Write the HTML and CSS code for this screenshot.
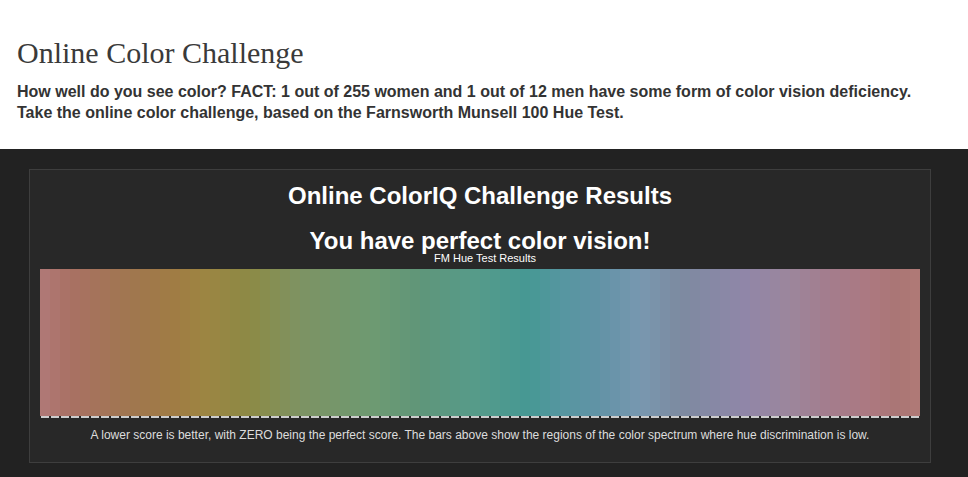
FILE: index.html
```html
<!DOCTYPE html>
<html>

<head>
    <title>Online Color Challenge</title>
    <link rel="stylesheet" href="styles.css">
</head>

<body>
    <div class="intro">
        <h1>Online Color Challenge</h1>
        <p>How well do you see color? FACT: 1 out of 255 women and 1 out of 12 men have some form of color vision deficiency.<br>
            Take the online color challenge, based on the Farnsworth Munsell 100 Hue Test.</p>
    </div>

    <div class="results">
        <div class="panel">
            <h2>Online ColorIQ Challenge Results</h2>
            <h3>You have perfect color vision!</h3>
            <div class="chart-label">FM Hue Test Results</div>
            <div class="chart">
                <div class="bars" id="bars"></div>
                <div class="baseline"></div>
            </div>
            <p class="note">A lower score is better, with ZERO being the perfect score. The bars above show the regions of the color spectrum where hue discrimination is low.</p>
        </div>
    </div>

    <script>
        // colour stops across the spectrum (x offset in px, colour)
        const stops = [
            [0, "#b07a78"], [30, "#a97064"], [90, "#a0764f"], [135, "#a07c44"],
            [160, "#9e8442"], [210, "#8c8a45"], [260, "#7d9363"], [335, "#6d9a72"],
            [380, "#5f9579"], [430, "#579b88"], [490, "#469894"], [520, "#5596a0"],
            [560, "#6292a6"], [600, "#7898b0"], [640, "#7c8aa0"], [680, "#8888a6"],
            [705, "#9086a8"], [750, "#9c869c"], [790, "#a47c8c"], [830, "#ac7880"],
            [860, "#aa7674"], [880, "#b07a76"]
        ];

        function hex(c) {
            return [1, 3, 5].map(i => parseInt(c.substr(i, 2), 16));
        }

        function colourAt(x) {
            for (let i = 0; i < stops.length - 1; i++) {
                const a = stops[i], b = stops[i + 1];
                if (x >= a[0] && x <= b[0]) {
                    const t = (x - a[0]) / (b[0] - a[0]);
                    const ca = hex(a[1]), cb = hex(b[1]);
                    const rgb = ca.map((v, k) => Math.round(v + (cb[k] - v) * t));
                    return `rgb(${rgb.join(",")})`;
                }
            }
            return stops[stops.length - 1][1];
        }

        const bars = document.getElementById("bars");
        for (let i = 0; i < 88; i++) {
            const bar = document.createElement("div");
            bar.className = "bar";
            bar.style.backgroundColor = colourAt(i * 10 + 5);
            bars.appendChild(bar);
        }
    </script>
</body>
</html>
```

FILE: styles.css
```css
body {
    margin: 0;
    background-color: #ffffff;
    font-family: "Liberation Sans", Arial, sans-serif;
}

.intro {
    padding: 35px 17px 26px;
    color: #333333;
}

.intro h1 {
    margin: 0;
    font-family: "Liberation Serif", Georgia, serif;
    font-weight: normal;
    font-size: 30px;
    line-height: 36px;
    color: #3a3a3a;
}

.intro p {
    margin: 10px 0 0;
    font-size: 16px;
    font-weight: bold;
    line-height: 21px;
}

.results {
    background-color: #222222;
    padding: 20px 0 14px 29px;
}

.panel {
    width: 900px;
    background-color: #282828;
    border: 1px solid #3e3e3e;
    color: #ffffff;
    text-align: center;
}

.panel h2 {
    margin: 12px 0 0;
    font-size: 24px;
    line-height: 28px;
}

.panel h3 {
    margin: 21px 0 0;
    font-size: 24px;
    line-height: 20px;
}

.chart-label {
    margin: 0 0 0 10px;
    font-size: 11px;
    line-height: 14px;
}

.chart {
    margin: 4px 10px 0;
    width: 880px;
}

.bars {
    display: flex;
    height: 147px;
}

.bar {
    width: 10px;
}

.baseline {
    height: 2px;
    margin-left: 1px;
    background: repeating-linear-gradient(to right, #cccccc 0 8px, transparent 8px 10px);
}

.note {
    margin: 9px 0 0;
    padding-bottom: 19px;
    font-size: 12px;
    line-height: 16px;
    color: #dddddd;
}
```
